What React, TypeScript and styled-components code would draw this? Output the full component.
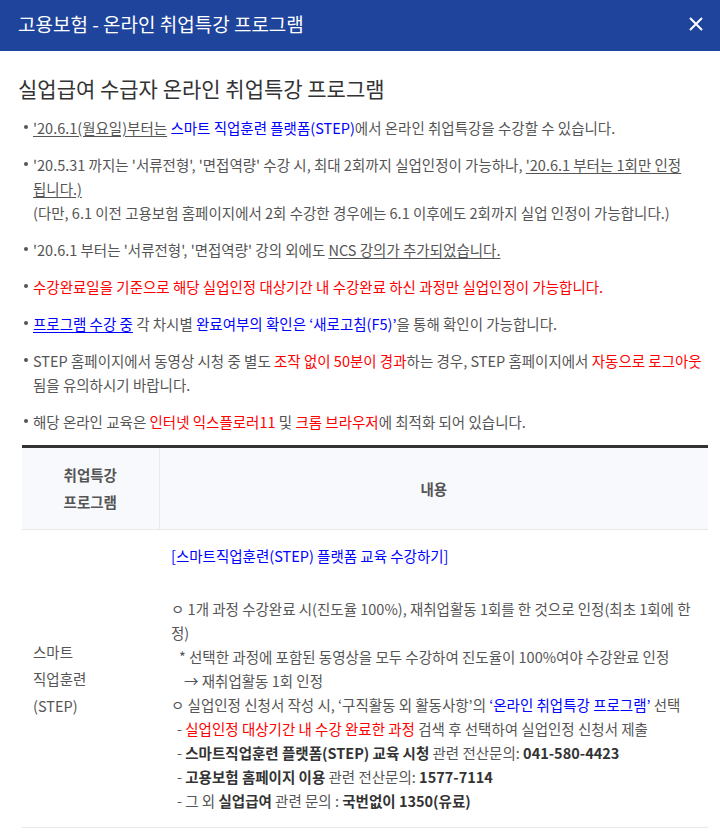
import styled, { createGlobalStyle } from 'styled-components';

const GlobalStyle = createGlobalStyle`
  body {
    margin: 0;
    background: #fff;
    font-family: 'Noto Sans CJK KR', 'Noto Sans', sans-serif;
  }
`;

const App = () => {
  return (
    <Popup>
      <GlobalStyle />
      <TopBar>
        <TopTitle>고용보험 - 온라인 취업특강 프로그램</TopTitle>
        <CloseButton aria-label="닫기">
          <svg width="14" height="14" viewBox="0 0 14 14">
            <path d="M1 1 L13 13 M13 1 L1 13" stroke="#fff" strokeWidth="2" />
          </svg>
        </CloseButton>
      </TopBar>

      <Body>
        <Heading>실업급여 수급자 온라인 취업특강 프로그램</Heading>

        <NoticeList>
          <NoticeItem>
            <Under>'20.6.1(월요일)부터는</Under> <Em $color="blue">스마트 직업훈련 플랫폼(STEP)</Em>에서
            온라인 취업특강을 수강할 수 있습니다.
          </NoticeItem>
          <NoticeItem>
            '20.5.31 까지는 '서류전형', '면접역량' 수강 시, 최대 2회까지 실업인정이 가능하나,{' '}
            <Under>'20.6.1 부터는 1회만 인정 됩니다.)</Under>
            <br />
            (다만, 6.1 이전 고용보험 홈페이지에서 2회 수강한 경우에는 6.1 이후에도 2회까지 실업 인정이 가능합니다.)
          </NoticeItem>
          <NoticeItem>
            '20.6.1 부터는 '서류전형', '면접역량' 강의 외에도 <Under>NCS 강의가 추가되었습니다.</Under>
          </NoticeItem>
          <NoticeItem $color="red">
            수강완료일을 기준으로 해당 실업인정 대상기간 내 수강완료 하신 과정만 실업인정이 가능합니다.
          </NoticeItem>
          <NoticeItem>
            <Em $color="blue">
              <Under>프로그램 수강 중</Under>
            </Em>{' '}
            각 차시별 <Em $color="blue">완료여부의 확인은 ‘새로고침(F5)’</Em>을 통해 확인이 가능합니다.
          </NoticeItem>
          <NoticeItem>
            STEP 홈페이지에서 동영상 시청 중 별도 <Em $color="red">조작 없이 50분이 경과</Em>하는 경우, STEP
            홈페이지에서 <Em $color="red">자동으로 로그아웃</Em> 됨을 유의하시기 바랍니다.
          </NoticeItem>
          <NoticeItem>
            해당 온라인 교육은 <Em $color="red">인터넷 익스플로러11</Em> 및 <Em $color="red">크롬 브라우저</Em>에
            최적화 되어 있습니다.
          </NoticeItem>
        </NoticeList>

        <ProgramTable>
          <colgroup>
            <col style={{ width: '137px' }} />
            <col />
          </colgroup>
          <thead>
            <tr>
              <HeadCell>
                취업특강
                <br />
                프로그램
              </HeadCell>
              <HeadCell>내용</HeadCell>
            </tr>
          </thead>
          <tbody>
            <tr>
              <NameCell>
                스마트
                <br />
                직업훈련
                <br />
                (STEP)
              </NameCell>
              <DetailCell>
                <LinkLine>[스마트직업훈련(STEP) 플랫폼 교육 수강하기]</LinkLine>
                <Line>ㅇ 1개 과정 수강완료 시(진도율 100%), 재취업활동 1회를 한 것으로 인정(최초 1회에 한정)</Line>
                <Line $indent={8}>* 선택한 과정에 포함된 동영상을 모두 수강하여 진도율이 100%여야 수강완료 인정</Line>
                <Line $indent={13}>→ 재취업활동 1회 인정</Line>
                <Line>
                  ㅇ 실업인정 신청서 작성 시, ‘구직활동 외 활동사항’의{' '}
                  <Em $color="blue">‘온라인 취업특강 프로그램’</Em> 선택
                </Line>
                <Line $indent={6}>
                  - <Em $color="red">실업인정 대상기간 내 수강 완료한 과정</Em> 검색 후 선택하여 실업인정 신청서 제출
                </Line>
                <Line $indent={6}>
                  - <Strong>스마트직업훈련 플랫폼(STEP) 교육 시청</Strong> 관련 전산문의:{' '}
                  <Strong>041-580-4423</Strong>
                </Line>
                <Line $indent={6}>
                  - <Strong>고용보험 홈페이지 이용</Strong> 관련 전산문의: <Strong>1577-7114</Strong>
                </Line>
                <Line $indent={6}>
                  - 그 외 <Strong>실업급여</Strong> 관련 문의 : <Strong>국번없이 1350(유료)</Strong>
                </Line>
              </DetailCell>
            </tr>
          </tbody>
        </ProgramTable>
      </Body>
    </Popup>
  );
};

const Popup = styled.div`
  width: 720px;
  min-height: 832px;
  background: #fff;
`;

const TopBar = styled.header`
  display: flex;
  align-items: center;
  justify-content: space-between;
  height: 51px;
  padding: 0 13px 0 18px;
  box-sizing: border-box;
  background: #1e449c;
`;

const TopTitle = styled.h1`
  margin: -4px 0 0;
  color: #fff;
  font-size: 19px;
  font-weight: 400;
  line-height: 26px;
`;

const CloseButton = styled.button`
  display: flex;
  align-items: center;
  justify-content: center;
  width: 22px;
  height: 22px;
  padding: 0;
  margin-top: -4px;
  border: 0;
  background: transparent;
  cursor: pointer;
`;

const Body = styled.main`
  padding: 22px 12px 0 22px;
`;

const Heading = styled.h2`
  margin: 0 0 13px -4px;
  color: #333;
  font-size: 21px;
  font-weight: 400;
  line-height: 30px;
`;

const NoticeList = styled.ul`
  margin: 0 0 11px;
  padding: 0;
  list-style: none;
`;

const NoticeItem = styled.li<{ $color?: string }>`
  position: relative;
  margin-bottom: 13px;
  padding-left: 11px;
  color: ${(p) => (p.$color === 'red' ? '#ff0000' : '#555')};
  font-size: 14.5px;
  line-height: 24px;
  word-break: keep-all;

  &:last-child {
    margin-bottom: 0;
  }

  &::before {
    content: '';
    position: absolute;
    left: 2px;
    top: 9px;
    width: 4px;
    height: 4px;
    border-radius: 50%;
    background: #555;
  }
`;

const Em = styled.span<{ $color: 'blue' | 'red' }>`
  color: ${(p) => (p.$color === 'blue' ? '#0000ff' : '#ff0000')};
`;

const Under = styled.span`
  text-decoration: underline;
  text-underline-offset: 2px;
`;

const Strong = styled.strong`
  color: #333;
  font-weight: 700;
`;

const ProgramTable = styled.table`
  width: 686px;
  border-collapse: collapse;
  border-top: 3px solid #333;
  table-layout: fixed;
  font-size: 14.5px;
`;

const HeadCell = styled.th`
  padding: 13px 0 14px;
  background: #f8f9fd;
  border-bottom: 1px solid #e8e8e8;
  color: #555;
  font-weight: 700;
  line-height: 27px;
  text-align: center;

  & + & {
    border-left: 1px solid #eaeaea;
  }
`;

const NameCell = styled.td`
  padding: 0 11px;
  color: #555;
  line-height: 27px;
  vertical-align: middle;
  border-bottom: 1px solid #e8e8e8;
`;

const DetailCell = styled.td`
  padding: 14px 11px 14px 12px;
  color: #555;
  line-height: 24px;
  vertical-align: top;
  border-bottom: 1px solid #e8e8e8;
`;

const LinkLine = styled.a`
  display: block;
  margin-bottom: 29px;
  color: #0000ff;
  text-decoration: none;
  cursor: pointer;
`;

const Line = styled.p<{ $indent?: number }>`
  margin: 0;
  padding-left: ${(p) => p.$indent ?? 0}px;
`;

export default App;
